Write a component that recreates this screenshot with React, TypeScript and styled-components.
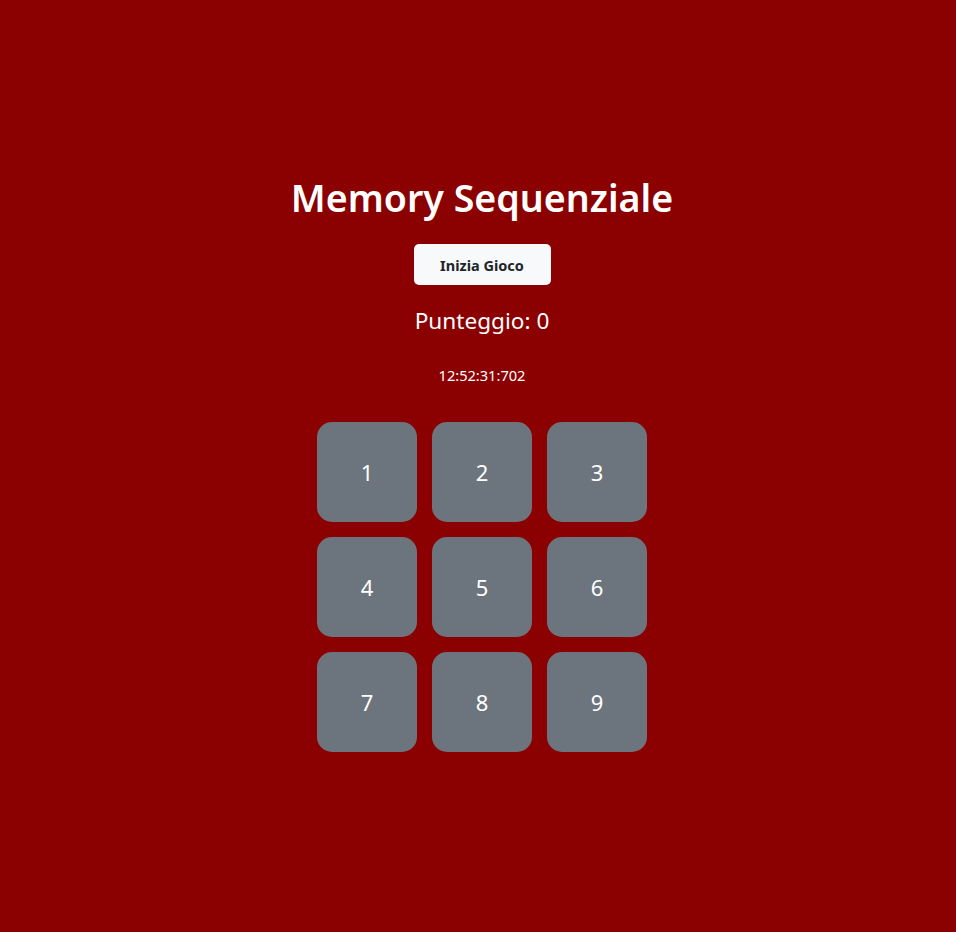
import React from "react";
import styled, { createGlobalStyle } from "styled-components";

const Global = createGlobalStyle`
  html, body { margin: 0; padding: 0; background: #8b0000; }
  body { font-family: "Noto Sans", "Open Sans", sans-serif; color: #fff; }
`;

const Page = styled.div`
  min-height: 932px;
  padding-left: 8px;
  box-sizing: border-box;
  display: flex;
  flex-direction: column;
  align-items: center;
  padding-top: 174px;
`;

const Title = styled.h1`
  margin: 0;
  font-size: 37.6px;
  line-height: 48px;
  font-weight: 600;
`;

const StartButton = styled.button`
  margin-top: 22px;
  width: 137px;
  height: 41px;
  border: none;
  border-radius: 5px;
  background: #f8f9fa;
  color: #212529;
  font-family: inherit;
  font-size: 14.5px;
  font-weight: 700;
  cursor: pointer;
`;

const Score = styled.div`
  margin-top: 21px;
  font-size: 22.6px;
  line-height: 30px;
`;

const Clock = styled.div`
  margin-top: 29px;
  font-size: 14.6px;
  line-height: 20px;
`;

const Grid = styled.div`
  margin-top: 37px;
  display: grid;
  grid-template-columns: repeat(3, 100px);
  gap: 15px;
`;

const Tile = styled.div`
  width: 100px;
  height: 100px;
  border-radius: 15px;
  background: #6c757d;
  display: flex;
  align-items: center;
  justify-content: center;
  font-size: 22px;
  color: #fff;
`;

export default function App() {
  return (
    <>
      <Global />
      <Page>
        <Title>Memory Sequenziale</Title>
        <StartButton>Inizia Gioco</StartButton>
        <Score>Punteggio: 0</Score>
        <Clock>12:52:31:702</Clock>
        <Grid>
          {[1, 2, 3, 4, 5, 6, 7, 8, 9].map((n) => (
            <Tile key={n}>{n}</Tile>
          ))}
        </Grid>
      </Page>
    </>
  );
}
